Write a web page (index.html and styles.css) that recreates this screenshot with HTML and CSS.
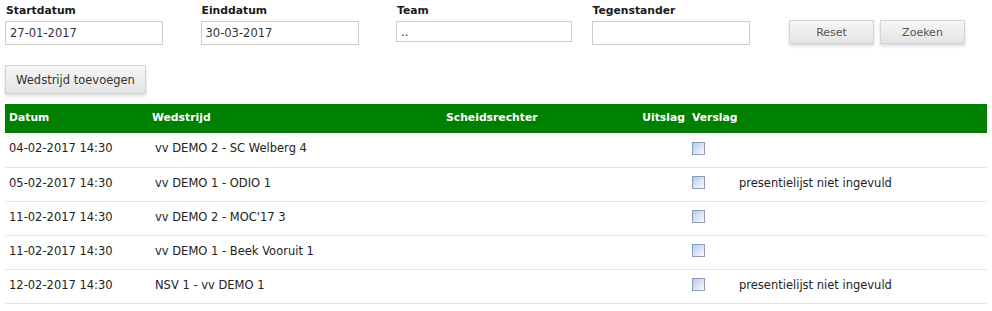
FILE: index.html
```html
<!DOCTYPE html>
<html>
<head>
<meta charset="utf-8">
<link rel="stylesheet" href="styles.css">
</head>
<body>
<form class="filters">
  <div class="field">
    <label class="lbl">Startdatum</label>
    <input class="inp" type="text" value="27-01-2017">
  </div>
  <div class="field">
    <label class="lbl">Einddatum</label>
    <input class="inp" type="text" value="30-03-2017">
  </div>
  <div class="field field-team">
    <label class="lbl">Team</label>
    <input class="inp inp-team" type="text" value="..">
  </div>
  <div class="field">
    <label class="lbl">Tegenstander</label>
    <input class="inp" type="text" value="">
  </div>
  <div class="actions">
    <button type="button" class="btn btn-sm">Reset</button>
    <button type="button" class="btn btn-sm">Zoeken</button>
  </div>
</form>
<div class="addrow">
  <button type="button" class="btn btn-add">Wedstrijd toevoegen</button>
</div>
<table class="matches">
  <colgroup>
    <col class="c-datum">
    <col class="c-wed">
    <col class="c-sch">
    <col class="c-uit">
    <col class="c-ver">
    <col class="c-rest">
  </colgroup>
  <thead>
    <tr>
      <th>Datum</th>
      <th>Wedstrijd</th>
      <th>Scheidsrechter</th>
      <th class="th-uit">Uitslag</th>
      <th>Verslag</th>
      <th></th>
    </tr>
  </thead>
  <tbody>
    <tr><td>04-02-2017 14:30</td><td class="td-wed">vv DEMO 2 - SC Welberg 4</td><td></td><td></td><td><span class="chk"></span></td><td></td></tr>
    <tr><td>05-02-2017 14:30</td><td class="td-wed">vv DEMO 1 - ODIO 1</td><td></td><td></td><td><span class="chk"></span></td><td>presentielijst niet ingevuld</td></tr>
    <tr><td>11-02-2017 14:30</td><td class="td-wed">vv DEMO 2 - MOC'17 3</td><td></td><td></td><td><span class="chk"></span></td><td></td></tr>
    <tr><td>11-02-2017 14:30</td><td class="td-wed">vv DEMO 1 - Beek Vooruit 1</td><td></td><td></td><td><span class="chk"></span></td><td></td></tr>
    <tr><td>12-02-2017 14:30</td><td class="td-wed">NSV 1 - vv DEMO 1</td><td></td><td></td><td><span class="chk"></span></td><td>presentielijst niet ingevuld</td></tr>
  </tbody>
</table>
</body>
</html>
```

FILE: styles.css
```css
* { box-sizing: border-box; }
body {
  margin: 0;
  padding: 3px 5px 0 5px;
  font-family: "DejaVu Sans", Verdana, sans-serif;
  font-size: 11.5px;
  color: #222;
  background: #fff;
}
.filters {
  display: flex;
  align-items: flex-start;
  margin: 0;
}
.field {
  width: 195.5px;
  display: flex;
  flex-direction: column;
}
.lbl {
  font-weight: bold;
  font-size: 10.8px;
  color: #1a1a1a;
  padding-left: 1px;
  height: 18px;
  line-height: 16px;
}
.inp {
  width: 158px;
  height: 24px;
  border: 1px solid #cccccc;
  padding: 0 4px;
  font-family: "DejaVu Sans", Verdana, sans-serif;
  font-size: 11.5px;
  color: #333;
  background: #fff;
  outline: none;
}
.inp-team { width: 176px; height: 21px; }
.actions {
  display: flex;
  gap: 6px;
  padding-top: 17px;
  margin-left: 2px;
}
.btn {
  font-family: "DejaVu Sans", Verdana, sans-serif;
  font-size: 11px;
  color: #555;
  border: 1px solid #d4d4d4;
  background: linear-gradient(#f6f6f6, #e4e4e4);
  box-shadow: 0 2px 3px rgba(0,0,0,0.15);
  cursor: pointer;
}
.btn-sm { width: 85px; height: 24px; }
.btn-add { width: 141px; height: 29px; padding: 0 4px; color: #333; font-size: 11.5px; }
.addrow { padding-top: 20px; padding-bottom: 10px; }
.matches {
  width: 982px;
  border-collapse: collapse;
  table-layout: fixed;
}
.c-datum { width: 143px; }
.c-wed { width: 294px; }
.c-sch { width: 196px; }
.c-uit { width: 50px; }
.c-ver { width: 47px; }
.matches th {
  background: #008000;
  color: #fff;
  font-weight: bold;
  font-size: 10.8px;
  text-align: left;
  height: 29px;
  padding: 0 4px 2px 4px;
  vertical-align: middle;
  white-space: nowrap;
}
.matches th.th-uit { text-align: right; padding-right: 3px; }
.matches td {
  height: 34px;
  padding: 0 4px 3px 4px;
  border-bottom: 1px solid #e4e4e4;
  color: #222;
  vertical-align: middle;
  white-space: nowrap;
}
.matches td.td-wed { padding-left: 7px; }
.chk {
  display: block;
  width: 13px;
  height: 13px;
  margin-left: 0;
  border: 1px solid #8f9cb6;
  background: linear-gradient(135deg, #b3c6ea 0%, #dce6f7 55%, #f8faff 100%);
}
```
